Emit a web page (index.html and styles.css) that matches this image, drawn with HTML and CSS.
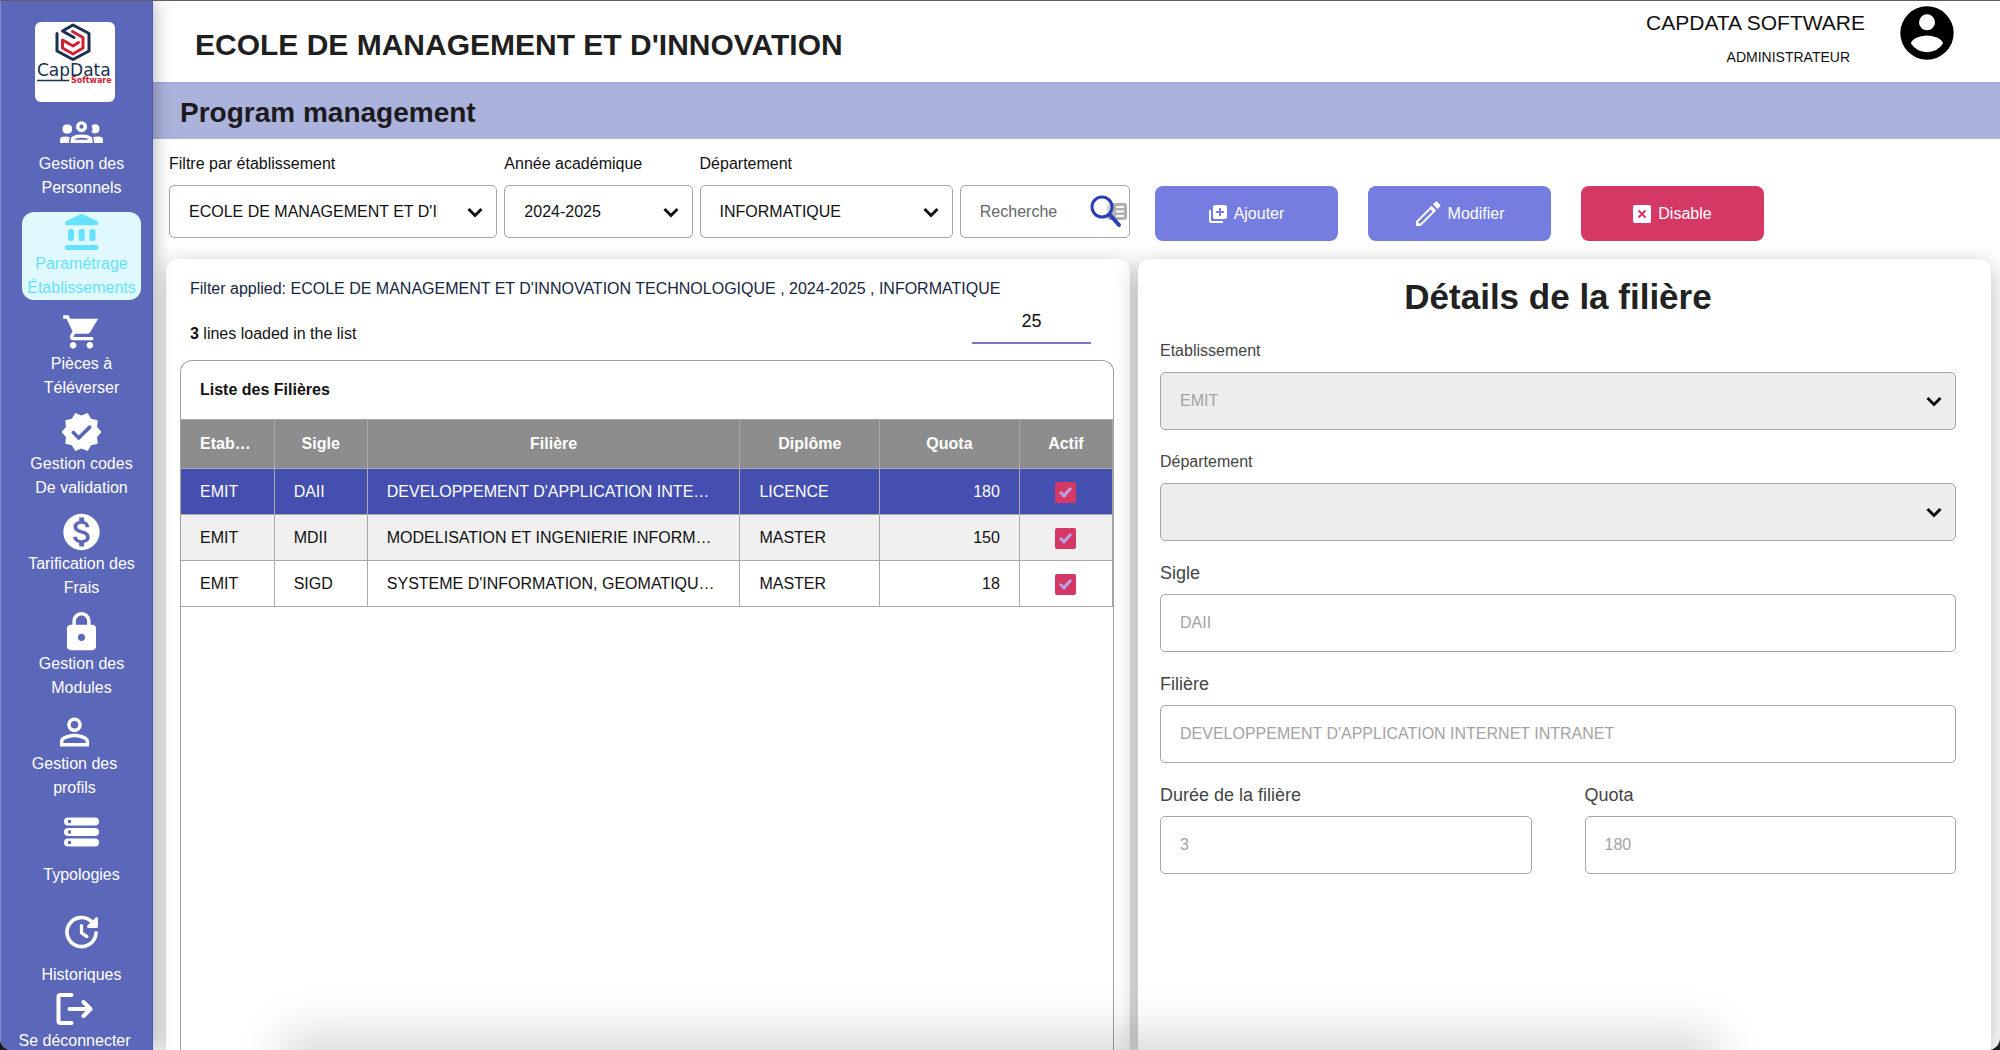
FILE: index.html
```html
<!DOCTYPE html>
<html lang="fr">
<head>
<meta charset="utf-8">
<meta name="viewport" content="width=device-width, initial-scale=1">
<title>Program management</title>
<link rel="stylesheet" href="styles.css">
</head>
<body>
<div class="app">
  <aside class="sidebar">
    <svg class="logo" viewBox="0 0 80 80" role="img" aria-label="CapData Software">
      <g fill="none" stroke-width="3" stroke-linejoin="round" stroke-linecap="round">
        <path stroke="#1b2f4f" d="M22 11.500V29L38 37.500 54 29V11.500L38 3 27.500 9 39 15.500"/>
        <path stroke="#cf2034" d="M37.500 9.500L48 15.500V26L38 32 27.500 26V18L38 24 43.500 20.500"/>
      </g>
      <path d="M2 58.500H34" stroke="#1b2f4f" stroke-width="1.500"/>
      <text class="logo-name" x="2" y="54">CapData</text>
      <text class="logo-sub" x="36" y="61">Software</text>
    </svg>
    <nav aria-label="Menu principal">
      <ul class="nav">
        <li class="nav-item"><a class="nav-link" href="#">
          <svg class="icon" viewBox="0 0 43 40" fill="currentColor">
            <rect x="2.500" y="12.500" width="9.500" height="9" rx="4"/>
            <path d="M0 31v-3.500Q0 24.500 5 24.500q3 0 5 .7Q9 27 9 31z"/>
            <path d="M31.500 13.500q1.500-1.200 3.500-1.200 4.500 0 4.500 4.500t-4.500 4.700q-3 0-3.500-2 1.500-1 1-3z"/>
            <path d="M43 31v-3.500q0-3-5-3-3 0-5 .7Q34 27 34 31z"/>
            <circle cx="21.500" cy="14.700" r="3.800" fill="none" stroke="currentColor" stroke-width="3.400"/>
            <path fill-rule="evenodd" d="M10.500 31v-3q0-5.500 11-5.500t11 5.500v3zm4-3.200h14q-1-2-7-2t-7 2z"/>
          </svg>
          <span>Gestion des<br>Personnels</span></a></li>
        <li class="nav-item"><a class="nav-link nav-link--active" href="#" aria-current="page">
          <svg class="icon" viewBox="0 0 40 40" fill="currentColor">
            <path d="M19 2.200q1.200-.6 2.400 0L35.500 9q1.300.8 1.300 2.500 0 1.800-2 1.800H5.500q-2 0-2-1.800Q3.500 9.800 5 9z"/>
            <rect x="6.500" y="17" width="6" height="12" rx="2.500"/><rect x="17.200" y="17" width="6" height="12" rx="2.500"/><rect x="28" y="17" width="6" height="12" rx="2.500"/>
            <rect x="3.500" y="33" width="33.300" height="5" rx="2"/>
          </svg>
          <span>Paramétrage<br>Établissements</span></a></li>
        <li class="nav-item"><a class="nav-link" href="#">
          <svg class="icon" viewBox="0 0 24 24" fill="currentColor"><path d="M7 18c-1.100 0-1.990.9-1.990 2S5.900 22 7 22s2-.9 2-2-.9-2-2-2zM1 2v2h2l3.600 7.590-1.350 2.450c-.16.280-.25.610-.25.960 0 1.100.9 2 2 2h12v-2H7.420c-.14 0-.25-.11-.25-.25l.03-.12.900-1.630h7.450c.75 0 1.410-.41 1.750-1.030L22 4H5.210l-.94-2H1zm16 16c-1.100 0-1.990.9-1.990 2s.89 2 1.990 2 2-.9 2-2-.9-2-2-2z"/></svg>
          <span>Pièces à<br>Téléverser</span></a></li>
        <li class="nav-item"><a class="nav-link" href="#">
          <svg class="icon" viewBox="1 1 22 22" fill="currentColor"><path d="M23 12l-2.440-2.790.34-3.690-3.610-.82-1.890-3.200L12 2.960 8.600 1.500 6.710 4.690 3.100 5.500l.34 3.700L1 12l2.440 2.790-.34 3.700 3.610.82L8.600 22.500l3.400-1.470 3.400 1.460 1.890-3.190 3.610-.82-.34-3.690L23 12z"/><path class="cut" d="M7.500 12.300l3 3 6-6"/></svg>
          <span>Gestion codes<br>De validation</span></a></li>
        <li class="nav-item"><a class="nav-link" href="#">
          <svg class="icon" viewBox="1 1 22 22" fill="currentColor"><path fill-rule="evenodd" d="M12 2a10 10 0 100 20 10 10 0 000-20zM13.410 18.090V20h-2.670v-1.930c-1.710-.36-3.160-1.460-3.270-3.400h1.960c.1 1.050.82 1.870 2.650 1.870 1.960 0 2.400-.98 2.400-1.590 0-.83-.44-1.610-2.670-2.140-2.480-.6-4.180-1.620-4.180-3.670 0-1.720 1.390-2.840 3.110-3.210V4h2.670v1.950c1.860.45 2.790 1.860 2.850 3.390H14.300c-.05-1.110-.64-1.870-2.220-1.870-1.500 0-2.400.68-2.400 1.640 0 .84.65 1.390 2.670 1.910s4.180 1.390 4.180 3.910c-.02 1.830-1.390 2.830-3.120 3.060z"/></svg>
          <span>Tarification des<br>Frais</span></a></li>
        <li class="nav-item"><a class="nav-link" href="#">
          <svg class="icon" viewBox="1 1 22 22" fill="currentColor"><path d="M18 8h-1V6c0-2.760-2.240-5-5-5S7 3.240 7 6v2H6c-1.100 0-2 .9-2 2v10c0 1.100.9 2 2 2h12c1.100 0 2-.9 2-2V10c0-1.100-.9-2-2-2zm-6 9c-1.100 0-2-.9-2-2s.9-2 2-2 2 .9 2 2-.9 2-2 2zm3.100-9H8.900V6c0-1.710 1.390-3.100 3.100-3.100 1.710 0 3.100 1.390 3.100 3.100v2z"/></svg>
          <span>Gestion des<br>Modules</span></a></li>
        <li class="nav-item"><a class="nav-link nav-link--narrow" href="#">
          <svg class="icon" viewBox="1 1 22 22" fill="currentColor"><path d="M12 5.900a2.100 2.100 0 110 4.200 2.100 2.100 0 010-4.200m0 9c2.970 0 6.100 1.460 6.100 2.100v1.100H5.900V17c0-.64 3.130-2.100 6.100-2.100M12 4C9.790 4 8 5.790 8 8s1.790 4 4 4 4-1.790 4-4-1.790-4-4-4zm0 9c-2.670 0-8 1.340-8 4v3h16v-3c0-2.660-5.330-4-8-4z"/></svg>
          <span>Gestion des<br>profils</span></a></li>
        <li class="nav-item nav-item--single"><a class="nav-link" href="#">
          <svg class="icon" viewBox="0 0 40 40" fill="currentColor">
            <path fill-rule="evenodd" d="M6.500 5.500h27a4 4 0 010 8h-27a4 4 0 010-8zm0 2.500v3h3V8z"/>
            <path fill-rule="evenodd" d="M6.500 16h27a4 4 0 010 8h-27a4 4 0 010-8zm0 2.500v3h3v-3z"/>
            <path fill-rule="evenodd" d="M6.500 26.500h27a4 4 0 010 8h-27a4 4 0 010-8zm0 2.500v3h3v-3z"/>
          </svg>
          <span>Typologies</span></a></li>
        <li class="nav-item nav-item--single"><a class="nav-link" href="#">
          <svg class="icon" viewBox="1 1 22 22" fill="none" stroke="currentColor" stroke-width="2" stroke-linecap="round" stroke-linejoin="round"><path d="M20 12.500A8 8 0 1117.700 6.400"/><path d="M12 8.500v4l3 2" stroke-width="1.800"/><path d="M20.300 4.500V9h-4.500z" fill="currentColor" stroke-width="1.500"/></svg>
          <span>Historiques</span></a></li>
      </ul>
    </nav>
    <a class="nav-link nav-link--narrow" href="#">
      <svg class="icon" viewBox="0 0 40 40" fill="none" stroke="currentColor" stroke-width="4" stroke-linecap="round" stroke-linejoin="round"><path d="M17 6H6a2 2 0 00-2 2v24a2 2 0 002 2h11M15 20h21M29 13l7 7-7 7"/></svg>
      <span>Se déconnecter</span></a>
  </aside>

  <div class="page">
    <header class="topbar">
      <h1 class="school">ECOLE DE MANAGEMENT ET D'INNOVATION</h1>
      <div class="user">
        <div class="user-text">
          <span class="user-name">CAPDATA SOFTWARE</span>
          <span class="user-role">ADMINISTRATEUR</span>
        </div>
        <svg class="avatar" viewBox="0 0 24 24" role="img" aria-label="Profil"><circle cx="12" cy="12" r="10"/><circle cx="12" cy="8" r="3" fill="#fff"/><path fill="#fff" d="M12 19.200a7.200 7.200 0 01-6-3.220c.03-1.990 4-3.080 6-3.080s5.970 1.090 6 3.080a7.200 7.200 0 01-6 3.220z"/></svg>
      </div>
    </header>
    <h2 class="page-title">Program management</h2>

    <main class="content">
      <form class="filters">
        <div class="filter">
          <label for="f-school">Filtre par établissement</label>
          <div class="select"><select id="f-school" class="control"><option>ECOLE DE MANAGEMENT ET D'INNOVATION TECHNOLOGIQUE</option></select>
            <svg class="chevron" viewBox="0 0 16 16"><path d="M1.500 5L8 11.500 14.500 5"/></svg></div>
        </div>
        <div class="filter">
          <label for="f-year">Année académique</label>
          <div class="select"><select id="f-year" class="control"><option>2024-2025</option></select>
            <svg class="chevron" viewBox="0 0 16 16"><path d="M1.500 5L8 11.500 14.500 5"/></svg></div>
        </div>
        <div class="filter">
          <label for="f-dept">Département</label>
          <div class="select"><select id="f-dept" class="control"><option>INFORMATIQUE</option></select>
            <svg class="chevron" viewBox="0 0 16 16"><path d="M1.500 5L8 11.500 14.500 5"/></svg></div>
        </div>
        <div class="filter filter--search">
          <div class="select"><input class="control" type="text" placeholder="Recherche" aria-label="Recherche">
            <svg class="search-icon" viewBox="0 0 40 34">
              <rect x="17" y="9" width="20" height="17" rx="3" fill="#b0b0b0"/>
              <path d="M26 13h8M26 17.500h8M26 22h8" stroke="#fff" stroke-width="2"/>
              <circle cx="12" cy="13" r="10" fill="#fff" fill-opacity=".5" stroke="#2b3fb5" stroke-width="3"/>
              <path d="M20 21l9 10" stroke="#2b3fb5" stroke-width="4" stroke-linecap="round"/>
            </svg></div>
        </div>
      </form>

      <div class="actions">
        <button class="btn" type="button"><svg viewBox="0 0 18 18"><path d="M1 5v11a1 1 0 001 1h12" fill="none" stroke="#fff" stroke-width="2"/><rect x="4" width="14" height="14" rx="2" fill="#fff"/><path d="M11 3v8M7 7h8" stroke="#757ee0" stroke-width="2"/></svg>Ajouter</button>
        <button class="btn" type="button"><svg class="pencil" viewBox="0 0 26 26" fill="#fff"><path d="M20.500.8q.8-.8 1.600 0l3 3q.8.800 0 1.600L22.600 8 18 3.300z"/><path fill-rule="evenodd" d="M16.500 4.800l4.700 4.700L5.700 25H1v-4.700zM15.500 8.500L3.500 20.500v2L5.500 22.500 17.500 10.500z"/></svg>Modifier</button>
        <button class="btn btn--danger" type="button"><svg viewBox="0 0 18 18"><rect width="18" height="18" rx="2" fill="#fff"/><path d="M5.500 5.500l7 7M12.500 5.500l-7 7" stroke="#d53864" stroke-width="2"/></svg>Disable</button>
      </div>

      <section class="card list-card">
        <p class="applied">Filter applied: ECOLE DE MANAGEMENT ET D'INNOVATION TECHNOLOGIQUE , 2024-2025 , INFORMATIQUE</p>
        <div class="list-head">
          <p class="loaded"><b>3</b> lines loaded in the list</p>
          <input class="page-size" type="text" inputmode="numeric" value="25" aria-label="Lines per page">
        </div>
        <div class="table-box">
          <table class="grid">
            <caption>Liste des Filières</caption>
            <colgroup><col class="c1"><col class="c1"><col class="c4"><col class="c2"><col class="c2"><col class="c1"></colgroup>
            <thead><tr><th scope="col">Etablissement</th><th scope="col">Sigle</th><th scope="col">Filière</th><th scope="col">Diplôme</th><th scope="col">Quota</th><th scope="col">Actif</th></tr></thead>
            <tbody>
              <tr class="selected"><td>EMIT</td><td>DAII</td><td>DEVELOPPEMENT D'APPLICATION INTERNET INTRANET</td><td>LICENCE</td><td class="num">180</td><td class="tick"><input type="checkbox" checked aria-label="DAII actif"></td></tr>
              <tr><td>EMIT</td><td>MDII</td><td>MODELISATION ET INGENIERIE INFORMATIQUE</td><td>MASTER</td><td class="num">150</td><td class="tick"><input type="checkbox" checked aria-label="MDII actif"></td></tr>
              <tr><td>EMIT</td><td>SIGD</td><td>SYSTEME D'INFORMATION, GEOMATIQUE ET DECISION</td><td>MASTER</td><td class="num">18</td><td class="tick"><input type="checkbox" checked aria-label="SIGD actif"></td></tr>
            </tbody>
          </table>
        </div>
      </section>

      <section class="card details">
        <h2 class="details-title">Détails de la filière</h2>
        <form class="fields">
          <div class="field">
            <label for="d-school">Etablissement</label>
            <div class="select"><select id="d-school" class="control" disabled><option>EMIT</option></select>
              <svg class="chevron" viewBox="0 0 16 16"><path d="M1.500 5L8 11.500 14.500 5"/></svg></div>
          </div>
          <div class="field">
            <label for="d-dept">Département</label>
            <div class="select"><select id="d-dept" class="control" disabled><option></option></select>
              <svg class="chevron" viewBox="0 0 16 16"><path d="M1.500 5L8 11.500 14.500 5"/></svg></div>
          </div>
          <div class="field field--text"><label for="d-code">Sigle</label><input id="d-code" class="control" type="text" value="DAII" disabled></div>
          <div class="field field--text"><label for="d-name">Filière</label><input id="d-name" class="control" type="text" value="DEVELOPPEMENT D'APPLICATION INTERNET INTRANET" disabled></div>
          <div class="field field--text field--half"><label for="d-length">Durée de la filière</label><input id="d-length" class="control" type="text" value="3" disabled></div>
          <div class="field field--text field--half"><label for="d-quota">Quota</label><input id="d-quota" class="control" type="text" value="180" disabled></div>
        </form>
      </section>
    </main>
  </div>
</div>
</body>
</html>
```

FILE: styles.css
```css
* { box-sizing: border-box; }

body {
  margin: 0;
  background: #1c1c1c;
  color: #111;
  font: 16px/24px "Liberation Sans", Arial, sans-serif;
}

h1, h2, p, ul { margin: 0; padding: 0; }
input, select, button { font: inherit; color: inherit; }

.app {
  display: flex;
  height: 100vh;
  overflow: hidden;
  border-radius: 0 0 12px 12px;
  background: #fff;
}

/* thin line along the top of the window */
.app::before {
  content: "";
  position: fixed;
  z-index: 3;
  inset: 0 0 auto;
  height: 1px;
  background: #5f5f63;
}

/* soft shade rising from the bottom edge */
.app::after {
  content: "";
  position: fixed;
  z-index: 3;
  left: 15%;
  right: 15%;
  bottom: -40px;
  height: 40px;
  box-shadow: 0 0 48px 16px rgba(0, 0, 0, .16);
  pointer-events: none;
}

/* ---------- sidebar ---------- */
.sidebar {
  position: relative;
  z-index: 1;
  display: flex;
  flex: 0 0 153px;
  flex-direction: column;
  min-width: 0;
  padding: 22px 11px 0 21px;
  background: #5b67b8;
  border-left: 1px solid #7f89cb;
  border-right: 1px solid #4d59b0;
  box-shadow: 0 0 18px rgba(0, 0, 0, .35);
}

.logo {
  flex: none;
  width: 80px;
  height: 80px;
  margin: 0 0 10px 13px;
  background: #fff;
  border-radius: 6px;
}

.logo-name { font: 17px "DejaVu Sans", sans-serif; fill: #1b2f4f; }
.logo-sub { font: 700 8px "DejaVu Sans", sans-serif; fill: #cf2034; }

.nav { list-style: none; }
.nav-item { margin-bottom: 12px; }
.nav-item--single { min-height: 88px; }
.nav-item--single .icon { margin-bottom: 11px; }
.nav-item:last-child { min-height: 0; margin-bottom: 2px; }

.nav-link {
  display: flex;
  flex-direction: column;
  align-items: center;
  border-radius: 12px;
  color: #fff;
  text-align: center;
  text-decoration: none;
  white-space: nowrap;
}

.nav-link--active { background: #dff9ff; color: #66e2ff; }
.nav-link--narrow { margin-right: 14px; }

.icon { display: block; height: 40px; width: 43px; }
.cut { fill: none; stroke: #5b67b8; stroke-width: 2; stroke-linecap: round; stroke-linejoin: round; }

/* ---------- header ---------- */
.page {
  display: flex;
  flex: 1;
  flex-direction: column;
  min-width: 0;
}

.topbar {
  display: flex;
  justify-content: space-between;
  padding: 0 41px 0 42px;
  height: 82px;
}

.school { padding-top: 25px; font-size: 30px; line-height: 40px; color: #1f1f1f; }

.user { display: flex; gap: 30px; }
.user-text {
  display: flex;
  flex-direction: column;
  align-items: flex-end;
  gap: 10px;
  padding-top: 11px;
}
.user-name { font-size: 21px; }
.user-role { padding-right: 15px; font-size: 14px; }
.avatar { width: 64px; height: 64px; margin-top: 1px; }

.page-title {
  padding: 4px 27px 0;
  border-top: 1px solid #9da4d0;
  background: #abb2db;
  color: #1b1b1f;
  font-size: 28px;
  line-height: 52px;
}

/* ---------- toolbar ---------- */
.content {
  display: grid;
  flex: 1;
  grid-template-columns: 964fr 853fr;
  grid-template-rows: auto 1fr;
  gap: 18px 8px;
  min-height: 0;
  padding: 13px 9px 0 13px;
}

.filters {
  display: grid;
  grid-template-columns: 328fr 188fr 253fr 170fr;
  align-items: start;
  gap: 7px;
  padding-left: 3px;
}

.filter { min-width: 0; }
.filter--search { padding-top: 33px; }
.filter label { display: block; margin-bottom: 9px; }

.select { position: relative; }

.control {
  display: block;
  width: 100%;
  height: 53px;
  padding: 0 58px 0 19px;
  border: 1px solid #a6a6a6;
  border-radius: 5px;
  background: #fff;
  appearance: none;
}
.control::placeholder { color: #666; opacity: 1; }
.filter--search .control { padding-right: 44px; }

.chevron {
  position: absolute;
  top: calc(50% - 8px);
  right: 14px;
  width: 16px;
  height: 16px;
  fill: none;
  stroke: #111;
  stroke-width: 3;
  pointer-events: none;
}

.search-icon {
  position: absolute;
  top: 9px;
  right: 0;
  width: 40px;
  height: 34px;
  pointer-events: none;
}

.actions {
  display: flex;
  gap: 30px;
  padding: 34px 0 0 17px;
}

.btn {
  display: flex;
  align-items: center;
  justify-content: center;
  gap: 7px;
  width: 183px;
  height: 55px;
  border: 0;
  border-radius: 8px;
  background: #757ee0;
  color: #fff;
}
.btn svg { width: 18px; height: 18px; }
.btn .pencil { width: 26px; height: 26px; }
.btn--danger { background: #d53864; }

/* ---------- cards ---------- */
.card {
  min-width: 0;
  border-radius: 12px 12px 0 0;
  background: #fff;
  box-shadow: 0 6px 24px rgba(0, 0, 0, .28);
}

.list-card {
  display: flex;
  flex-direction: column;
  padding: 18px 16px 0 14px;
}

.applied { padding-left: 10px; color: #16263f; }

.list-head {
  display: flex;
  justify-content: space-between;
  padding: 0 23px 14px 10px;
}
.loaded { padding-top: 21px; }

.page-size {
  width: 119px;
  height: 43px;
  padding: 0;
  border: 0;
  border-bottom: 2px solid #7079c9;
  background: none;
  font-size: 18px;
  text-align: center;
}

.table-box {
  flex: 1;
  overflow: hidden;
  border: 1px solid #a0a0a0;
  border-bottom: 0;
  border-radius: 12px 12px 0 0;
}

.grid {
  width: 100%;
  table-layout: fixed;
  border-collapse: collapse;
}
.c1 { width: 10%; }
.c2 { width: 15%; }
.c4 { width: 40%; }

.grid caption {
  padding: 17px 19px;
  font-weight: 700;
  text-align: left;
}

.grid th, .grid td {
  overflow: hidden;
  height: 46px;
  padding: 0 19px;
  border: 1px solid #a9a9a9;
  text-align: left;
  text-overflow: ellipsis;
  white-space: nowrap;
}
.grid th {
  height: 49px;
  background: #8d8d8d;
  color: #fff;
  text-align: center;
}
.grid th:first-child, .grid td:first-child { border-left: 0; }
.grid tbody tr:nth-child(even) { background: #f0f0f0; }
.grid tbody .selected { background: #444fb0; color: #fff; }
.grid .num { text-align: right; }
.grid .tick { padding: 0; text-align: center; }

.tick input {
  position: relative;
  width: 21px;
  height: 21px;
  margin: 0;
  border-radius: 2px;
  background: #d53864;
  appearance: none;
  vertical-align: middle;
}
.tick input:checked::after {
  content: "";
  position: absolute;
  top: 3px;
  left: 7px;
  width: 4px;
  height: 9px;
  border: solid #b9a3e3;
  border-width: 0 3px 3px 0;
  transform: rotate(42deg);
}

/* ---------- details ---------- */
.details { padding: 16px 35px 0 22px; }

.details-title {
  margin-bottom: 20px;
  color: #222;
  font-size: 35px;
  line-height: 44px;
  text-align: center;
}

.fields {
  display: grid;
  grid-template-columns: 1fr 1fr;
  gap: 20px 53px;
}
.field { grid-column: span 2; }
.field--half { grid-column: span 1; }
.field label { display: block; margin-bottom: 9px; color: #444; }
.field--text label { font-size: 18px; }
.field .control { height: 58px; opacity: 1; color: #a3a3a3; }
.field select.control { background: #ededed; }
```
